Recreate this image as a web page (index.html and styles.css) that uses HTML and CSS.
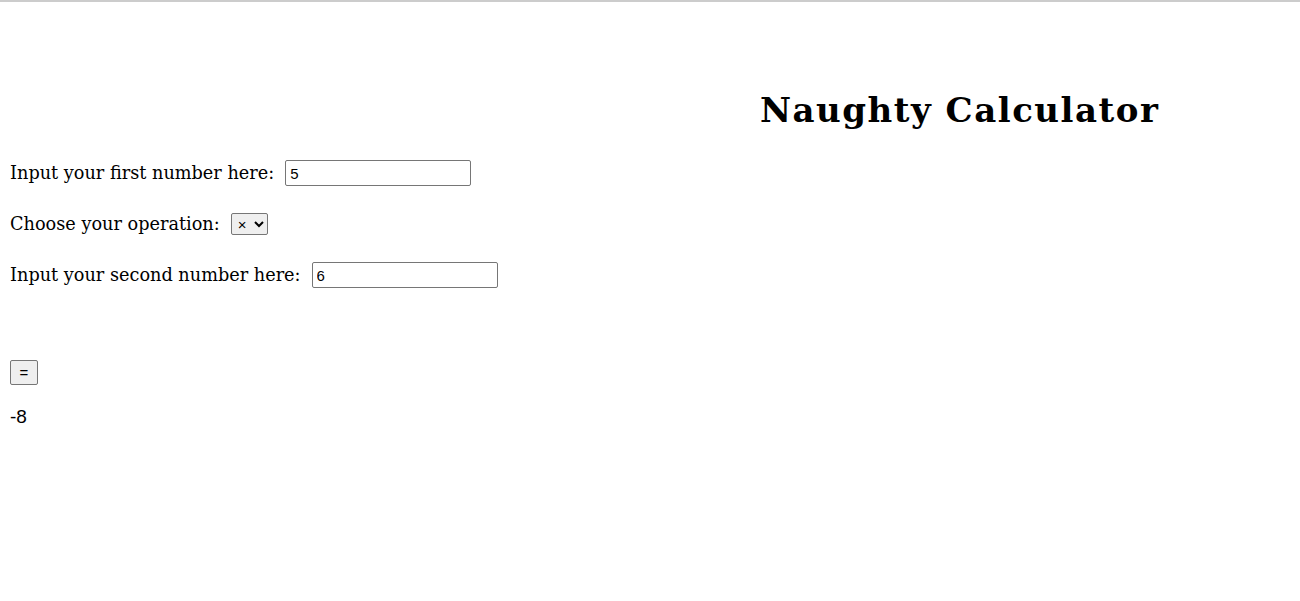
FILE: index.html
```html
<!DOCTYPE html>
<html>
<head>
<meta charset="utf-8">
<link rel="stylesheet" href="styles.css">
</head>
<body>
<div class="topline"></div>
<h1 class="title">Naughty Calculator</h1>
<div class="form">
  <div class="row"><label>Input your first number here:</label><input class="num" type="text" value="5"></div>
  <div class="row"><label>Choose your operation:</label><select class="op"><option>×</option></select></div>
  <div class="row"><label>Input your second number here:</label><input class="num" type="text" value="6"></div>
</div>
<button class="eq">=</button>
<div class="result">-8</div>
</body>
</html>
```
FILE: styles.css
```css
html, body { margin: 0; padding: 0; background: #fff; }
body { font-family: "DejaVu Serif", serif; color: #000; }
.topline { height: 2px; background: #cccccc; }
.title {
  font-family: "DejaVu Serif", serif;
  font-weight: bold;
  font-size: 34px;
  letter-spacing: 1.5px;
  margin: 0;
  padding: 88px 0 0 760px;
  line-height: 40px;
}
.form { padding: 30px 0 0 10px; display: flex; flex-direction: column; gap: 25px; }
.row { display: flex; align-items: center; font-size: 17.7px; line-height: 26px; height: 26px; }
.row label { margin-right: 11px; }
.num {
  width: 186px; height: 26px; box-sizing: border-box;
  border: 1px solid #767676; border-radius: 2px; padding: 1px 4px;
  font-family: "Liberation Sans", sans-serif; font-size: 15px;
}
.op {
  font-family: "Liberation Sans", sans-serif; font-size: 15px;
  height: 22px; width: 37px; box-sizing: border-box;
  border: 1px solid #767676; border-radius: 2px; padding: 0 0 0 2px;
}
.eq {
  display: block;
  margin: 72px 0 0 10px; width: 28px; height: 25px;
  font-family: "Liberation Sans", sans-serif; font-size: 15px;
  border: 1px solid #767676; border-radius: 2px; background: #efefef;
}
.result { margin: 21px 0 0 10px; font-family: "Liberation Sans", sans-serif; font-size: 19px; }
```
